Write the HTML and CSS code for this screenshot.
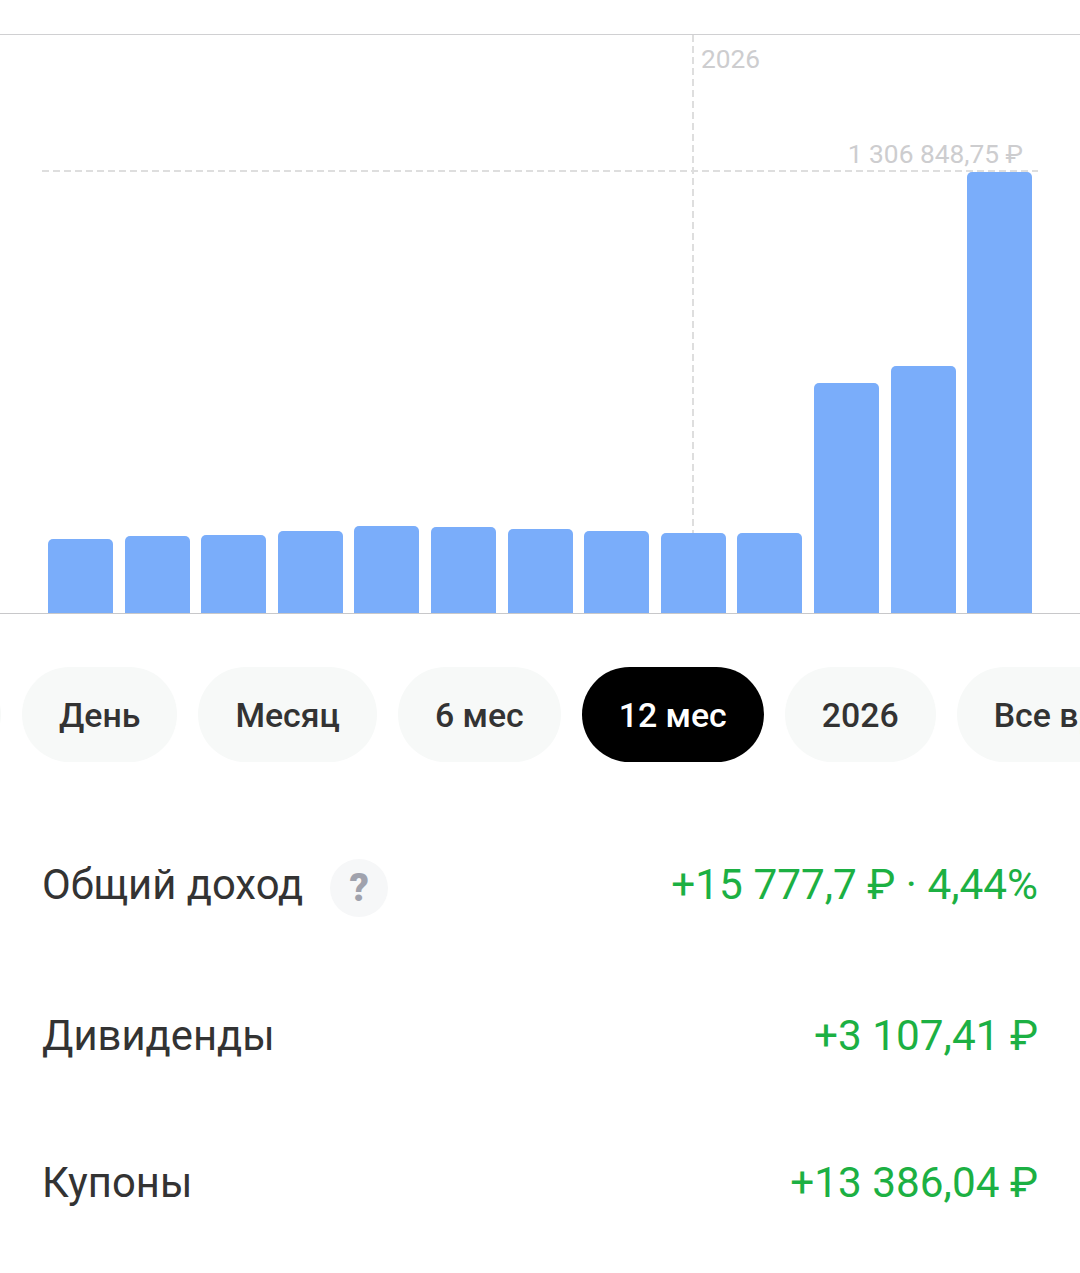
FILE: index.html
```html
<!DOCTYPE html>
<html lang="ru">
<head>
<meta charset="utf-8">
<title>Доход</title>
<link rel="stylesheet" href="styles.css">
</head>
<body>
<div class="page">
  <section class="chart">
    <div class="guide-v"></div>
    <div class="guide-h"></div>
    <span class="label-year">2026</span>
    <span class="label-max">1 306 848,75 ₽</span>
    <div class="bars">
      <div class="bar" style="height:74px"></div>
      <div class="bar" style="height:77px"></div>
      <div class="bar" style="height:78px"></div>
      <div class="bar" style="height:82px"></div>
      <div class="bar" style="height:87px"></div>
      <div class="bar" style="height:86px"></div>
      <div class="bar" style="height:84px"></div>
      <div class="bar" style="height:82px"></div>
      <div class="bar" style="height:80px"></div>
      <div class="bar" style="height:80px"></div>
      <div class="bar" style="height:230px"></div>
      <div class="bar" style="height:247px"></div>
      <div class="bar" style="height:441px"></div>
    </div>
  </section>
  <nav class="pills">
    <span class="pill">Неделя</span>
    <span class="pill">День</span>
    <span class="pill">Месяц</span>
    <span class="pill">6 мес</span>
    <span class="pill pill-active">12 мес</span>
    <span class="pill">2026</span>
    <span class="pill">Все время</span>
  </nav>
  <section class="stats">
    <div class="row row-total">
      <div class="row-title"><span>Общий доход</span><span class="help">?</span></div>
      <span class="value">+15 777,7 ₽ · 4,44%</span>
    </div>
    <div class="row row-div">
      <span>Дивиденды</span>
      <span class="value">+3 107,41 ₽</span>
    </div>
    <div class="row row-coupon">
      <span>Купоны</span>
      <span class="value">+13 386,04 ₽</span>
    </div>
  </section>
</div>
</body>
</html>
```
FILE: styles.css
```css
* { box-sizing: border-box; }
html, body { margin: 0; padding: 0; background: #fff; }
body { font-family: Roboto, "Noto Sans", sans-serif; color: #333; }
.page { width: 1080px; height: 1273px; overflow: hidden; padding-top: 34px; }

.chart {
  position: relative;
  height: 580px;
  border-top: 1px solid #d0d0d2;
  border-bottom: 1px solid #c8c8ca;
}
.bars {
  position: relative;
  height: 100%;
  display: flex;
  align-items: flex-end;
  gap: 11.6px;
  padding-left: 48px;
}
.bar {
  width: 65px;
  background: #7aadfa;
  border-radius: 5px 5px 0 0;
}
.guide-v {
  position: absolute;
  left: 692px;
  top: 0;
  width: 2px;
  height: 499px;
  background: repeating-linear-gradient(to bottom, #dedede 0 7px, transparent 7px 11px);
}
.guide-h {
  position: absolute;
  left: 42px;
  top: 135px;
  width: 996px;
  height: 2px;
  background: repeating-linear-gradient(to right, #dedede 0 7px, transparent 7px 11px);
}
.label-year, .label-max {
  position: absolute;
  font-size: 26.3px;
  line-height: 32px;
  color: #cdcdcf;
}
.label-year { left: 701px; top: 8px; }
.label-max { right: 57px; top: 103px; }

.pills {
  display: flex;
  gap: 21px;
  margin-top: 53px;
  margin-left: -189px;
  width: 1400px;
}
.pill {
  flex: none;
  height: 95px;
  padding: 0 37px;
  border-radius: 48px;
  background: #f7f9f8;
  font-size: 33.85px;
  font-weight: 500;
  line-height: 97px;
  color: #333;
}
.pill:first-child { width: 190px; color: transparent; }
.pill-active { background: #000; color: #fff; }

.stats { padding: 0 42px; font-size: 41.8px; color: #333; }
.row {
  display: flex;
  justify-content: space-between;
  align-items: center;
  line-height: 50px;
}
.row-total { margin-top: 93px; height: 60px; }
.row-div { margin-top: 91px; height: 60px; }
.row-coupon { margin-top: 87px; height: 60px; }
.row-title { display: flex; align-items: center; gap: 27px; }
.value { font-size: 42.3px; color: #1cb043; }
.help {
  width: 58px;
  height: 58px;
  margin-top: 6px;
  border-radius: 50%;
  background: #f6f7f8;
  color: #a0a2ad;
  font-size: 38px;
  font-weight: 900;
  line-height: 58px;
  text-align: center;
}
```
